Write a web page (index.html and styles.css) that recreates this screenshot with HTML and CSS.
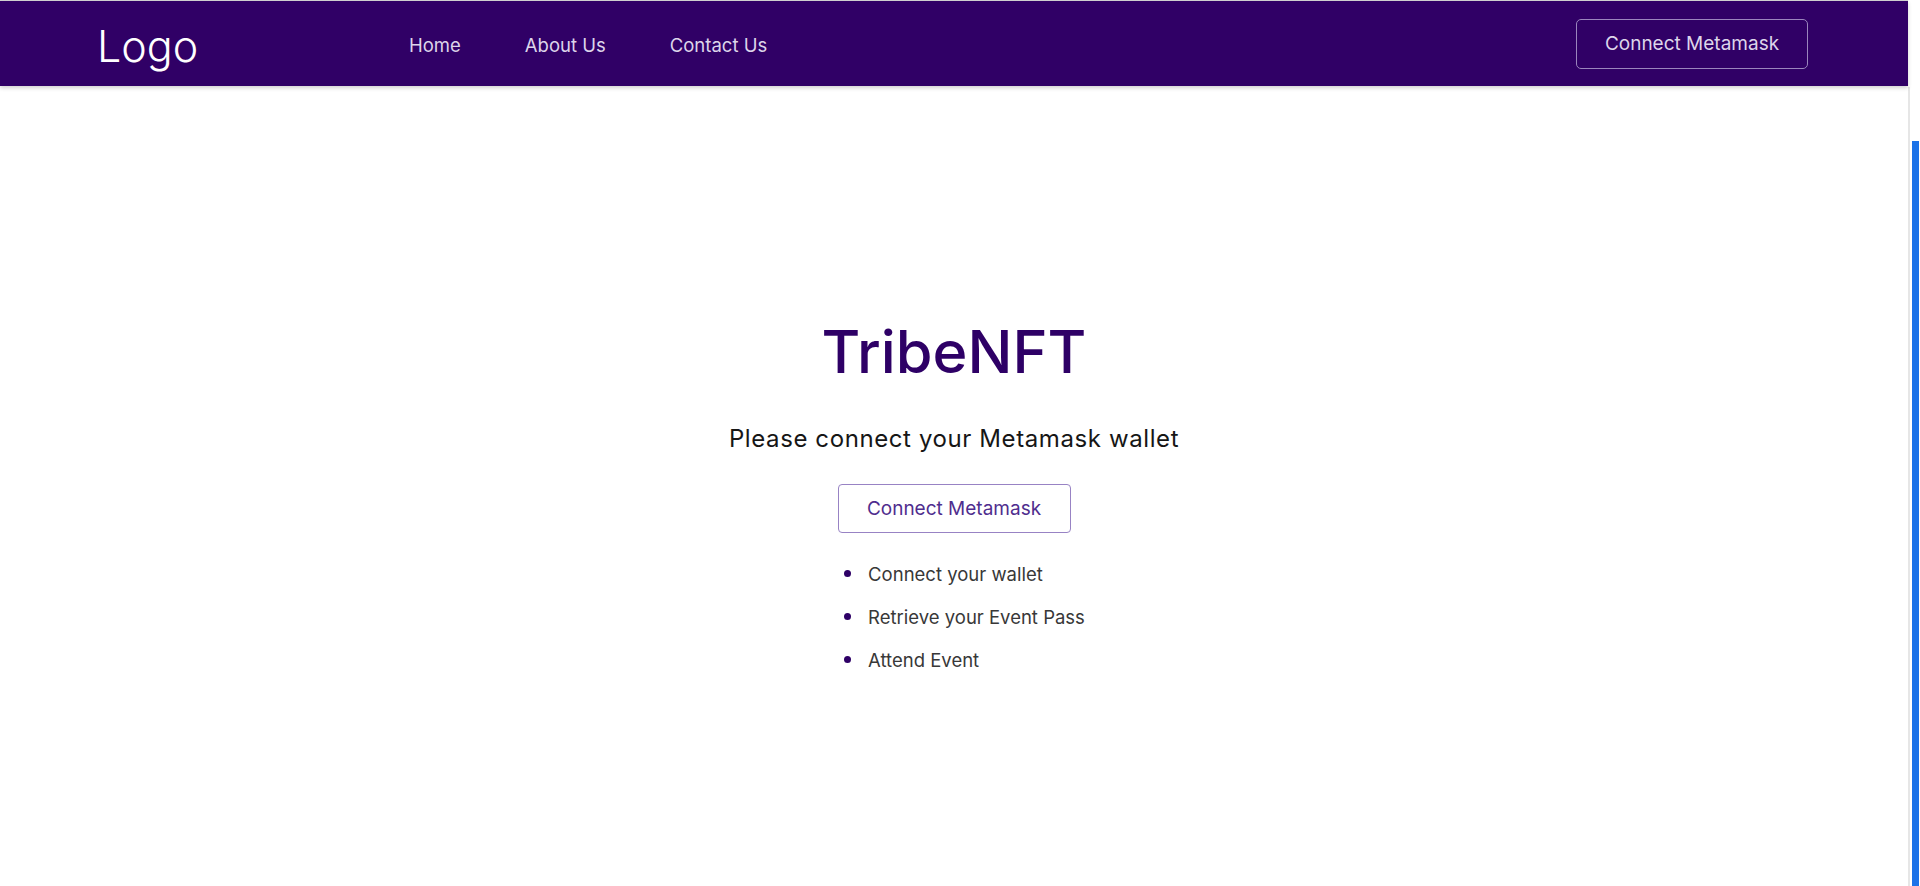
FILE: index.html
```html
<!DOCTYPE html>
<html lang="en">
<head>
<meta charset="utf-8">
<title>TribeNFT</title>
<link rel="stylesheet" href="styles.css">
</head>
<body>
<div class="frame">
  <div class="page">
    <header class="nav">
      <div class="logo">Logo</div>
      <nav class="links">
        <a class="link" href="#">Home</a>
        <a class="link" href="#">About Us</a>
        <a class="link" href="#">Contact Us</a>
      </nav>
      <button class="nav-btn" type="button">Connect Metamask</button>
    </header>
    <main class="hero">
      <h1 class="title">TribeNFT</h1>
      <p class="subtitle">Please connect your Metamask wallet</p>
      <button class="hero-btn" type="button">Connect Metamask</button>
      <ul class="steps">
        <li class="step">Connect your wallet</li>
        <li class="step">Retrieve your Event Pass</li>
        <li class="step">Attend Event</li>
      </ul>
    </main>
  </div>
  <div class="rail">
    <div class="rail-track">
      <div class="rail-thumb"></div>
    </div>
  </div>
</div>
</body>
</html>
```
FILE: styles.css
```css
html, body {
  margin: 0;
  padding: 0;
  height: 886px;
  overflow: hidden;
  background: #ffffff;
}

body {
  font-family: "Inter", "Noto Sans", sans-serif;
}

.frame {
  display: flex;
  height: 886px;
}

.page {
  width: 1908px;
  flex: none;
  border-top: 1px solid #d4d4d4;
  display: flex;
  flex-direction: column;
}

/* ---------- Navbar ---------- */
.nav {
  height: 80px;
  padding: 5px 100px 0 97px;
  background: #300066;
  display: flex;
  align-items: center;
  box-shadow: 0 2px 4px rgba(0, 0, 0, 0.18);
  position: relative;
  z-index: 1;
}

.logo {
  font-size: 43px;
  font-weight: 300;
  line-height: 50px;
  color: #ffffff;
  width: 312px;
}

.links {
  display: flex;
  gap: 64px;
  flex: 1;
  margin-bottom: 2px;
}

.link {
  font-size: 18.5px;
  line-height: 22px;
  color: #ddd5ea;
  text-decoration: none;
  white-space: nowrap;
}

.nav-btn {
  box-sizing: border-box;
  font-family: inherit;
  font-size: 19px;
  line-height: 24px;
  color: #ddd5ea;
  background: transparent;
  border: 1px solid #9a85bd;
  border-radius: 5px;
  padding: 12px 0;
  width: 232px;
  text-align: center;
  white-space: nowrap;
  margin-bottom: 4px;
}

/* ---------- Hero ---------- */
.hero {
  display: flex;
  flex-direction: column;
  align-items: center;
  padding-top: 229px;
}

.title {
  margin: 0;
  font-size: 59.5px;
  font-weight: 500;
  line-height: 72px;
  color: #2e0066;
}

.subtitle {
  margin: 37px 0 0;
  font-size: 24px;
  line-height: 30px;
  letter-spacing: 0.6px;
  color: #161616;
}

.hero-btn {
  box-sizing: border-box;
  margin-top: 30px;
  font-family: inherit;
  font-size: 19px;
  line-height: 24px;
  color: #4f2d8e;
  background: #ffffff;
  border: 1px solid #9883c4;
  border-radius: 4px;
  padding: 11.5px 0;
  width: 233px;
  text-align: center;
  white-space: nowrap;
}

.steps {
  list-style: none;
  margin: 20px 0 0;
  padding: 0 0 0 21px;
}

.step {
  display: flex;
  align-items: center;
  gap: 17px;
  height: 43px;
  font-size: 18.5px;
  line-height: 43px;
  color: #383838;
}

.step::before {
  content: "";
  width: 7px;
  height: 7px;
  border-radius: 50%;
  background: #2e0066;
  margin-bottom: 3px;
  flex: none;
}

/* ---------- Right rail ---------- */
.rail {
  flex: 1;
  padding-top: 87px;
  display: flex;
}

.rail-track {
  flex: 1;
  border-left: 2px solid #e6e6e6;
  padding: 54px 1px 0 2px;
  display: flex;
}

.rail-thumb {
  width: 7px;
  background: #1b72e8;
}
```
